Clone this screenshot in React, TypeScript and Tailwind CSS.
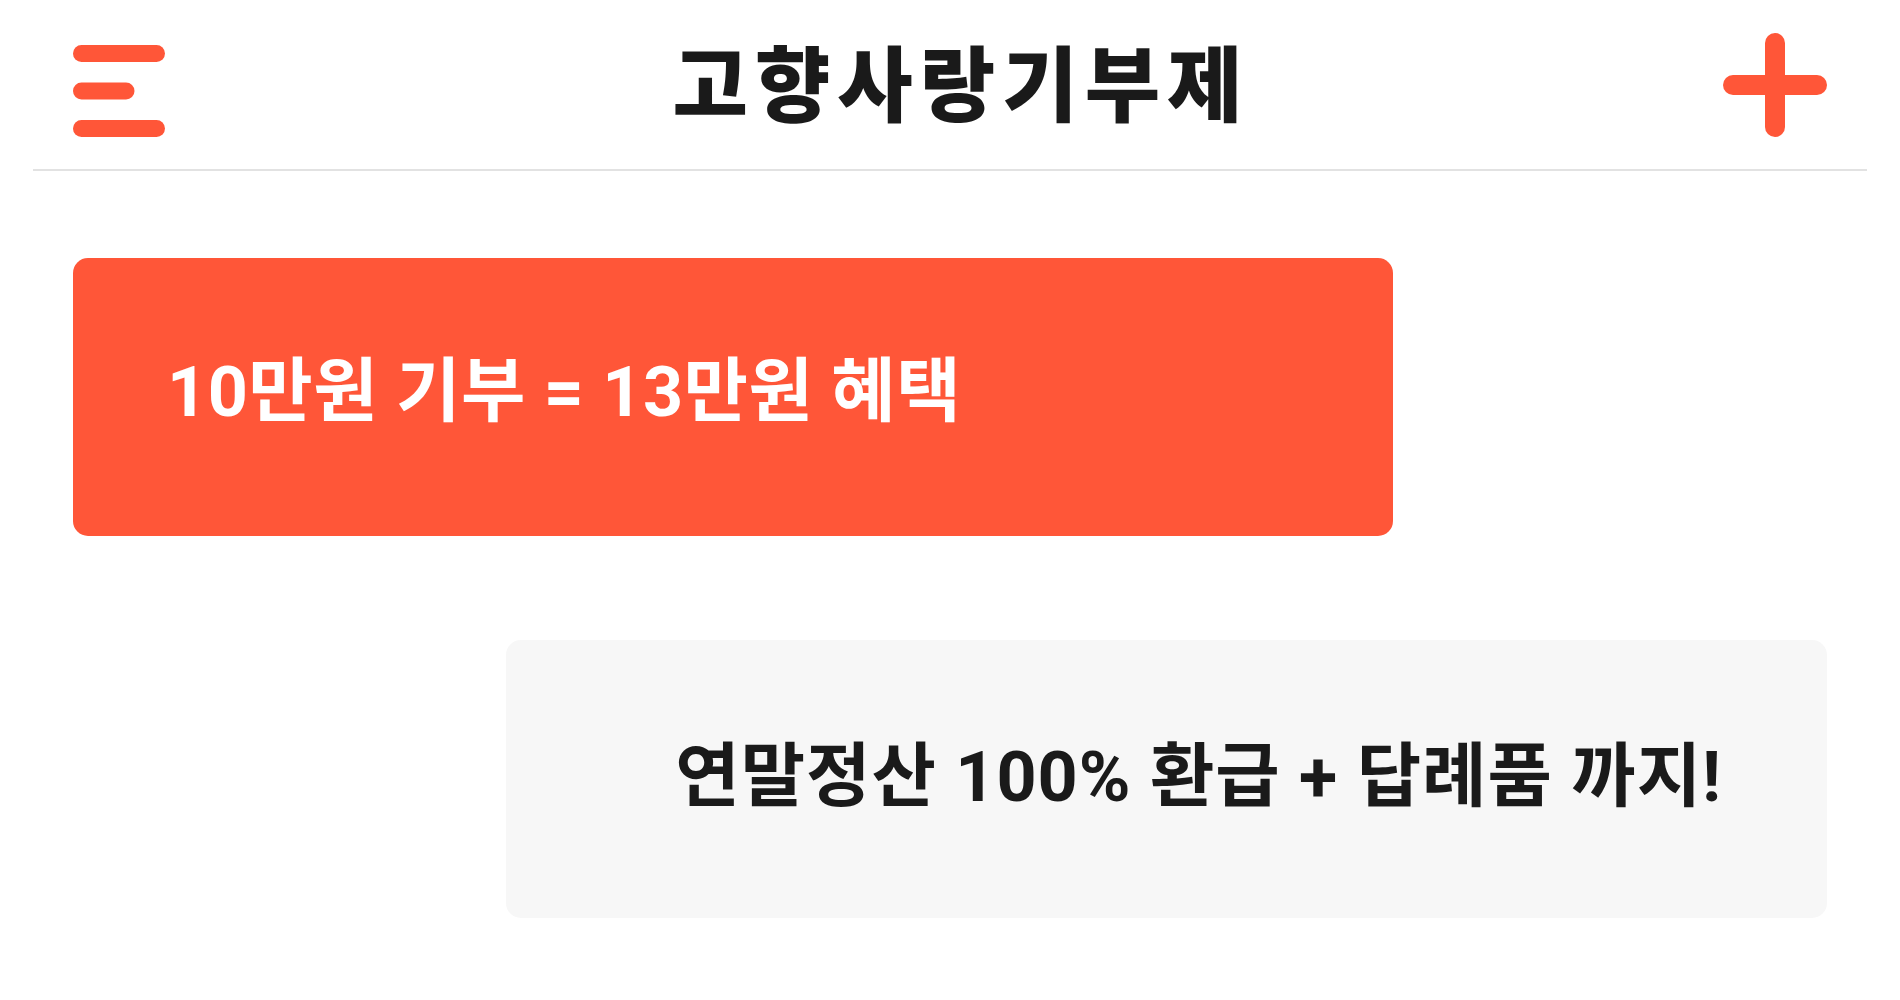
import React from "react";

const font = { fontFamily: '"Roboto", "Noto Sans CJK KR", sans-serif' };

const MenuIcon: React.FC = () => (
  <svg width="92" height="92" viewBox="0 0 92 92" fill="none">
    <g stroke="#FF5638" strokeWidth="17" strokeLinecap="round">
      <line x1="8.5" y1="8.5" x2="83.5" y2="8.5" />
      <line x1="8.5" y1="46" x2="53" y2="46" />
      <line x1="8.5" y1="83.5" x2="83.5" y2="83.5" />
    </g>
  </svg>
);

const PlusIcon: React.FC = () => (
  <svg width="104" height="104" viewBox="0 0 104 104" fill="none">
    <g stroke="#FF5638" strokeWidth="20" strokeLinecap="round">
      <line x1="52" y1="10" x2="52" y2="94" />
      <line x1="10" y1="52" x2="94" y2="52" />
    </g>
  </svg>
);

export default function App() {
  return (
    <div className="min-h-screen bg-white" style={font}>
      <div className="px-[33px]">
        {/* Header */}
        <header className="flex h-[171px] items-center justify-between border-b-2 border-[#e2e2e2] px-10">
          <div className="mt-[13px]">
            <MenuIcon />
          </div>
          <h1
            className="-mt-[10px] pl-[34px] text-[82px] font-black leading-none tracking-[7px] text-[#1a1a1a]"
            style={{ fontFamily: '"Noto Sans CJK KR", sans-serif' }}
          >
            고향사랑기부제
          </h1>
          <div>
            <PlusIcon />
          </div>
        </header>
      </div>

      {/* Cards */}
      <main className="flex flex-col gap-[104px] px-[73px] pt-[87px]">
        <div className="flex h-[278px] w-[1320px] items-center rounded-[15px] bg-[#FF5638] px-[94px] pb-[10px]">
          <p className="text-[70px] font-bold leading-none tracking-[0.5px] text-white">
            10만원 기부 = 13만원 혜택
          </p>
        </div>

        <div className="flex h-[278px] w-[1321px] items-center justify-end self-end rounded-[15px] bg-[#f7f7f7] px-[105px] pb-[4px]">
          <p className="text-[70px] font-bold leading-none tracking-[1px] text-[#1a1a1a]">
            연말정산 100% 환급 + 답례품 까지!
          </p>
        </div>
      </main>
    </div>
  );
}
